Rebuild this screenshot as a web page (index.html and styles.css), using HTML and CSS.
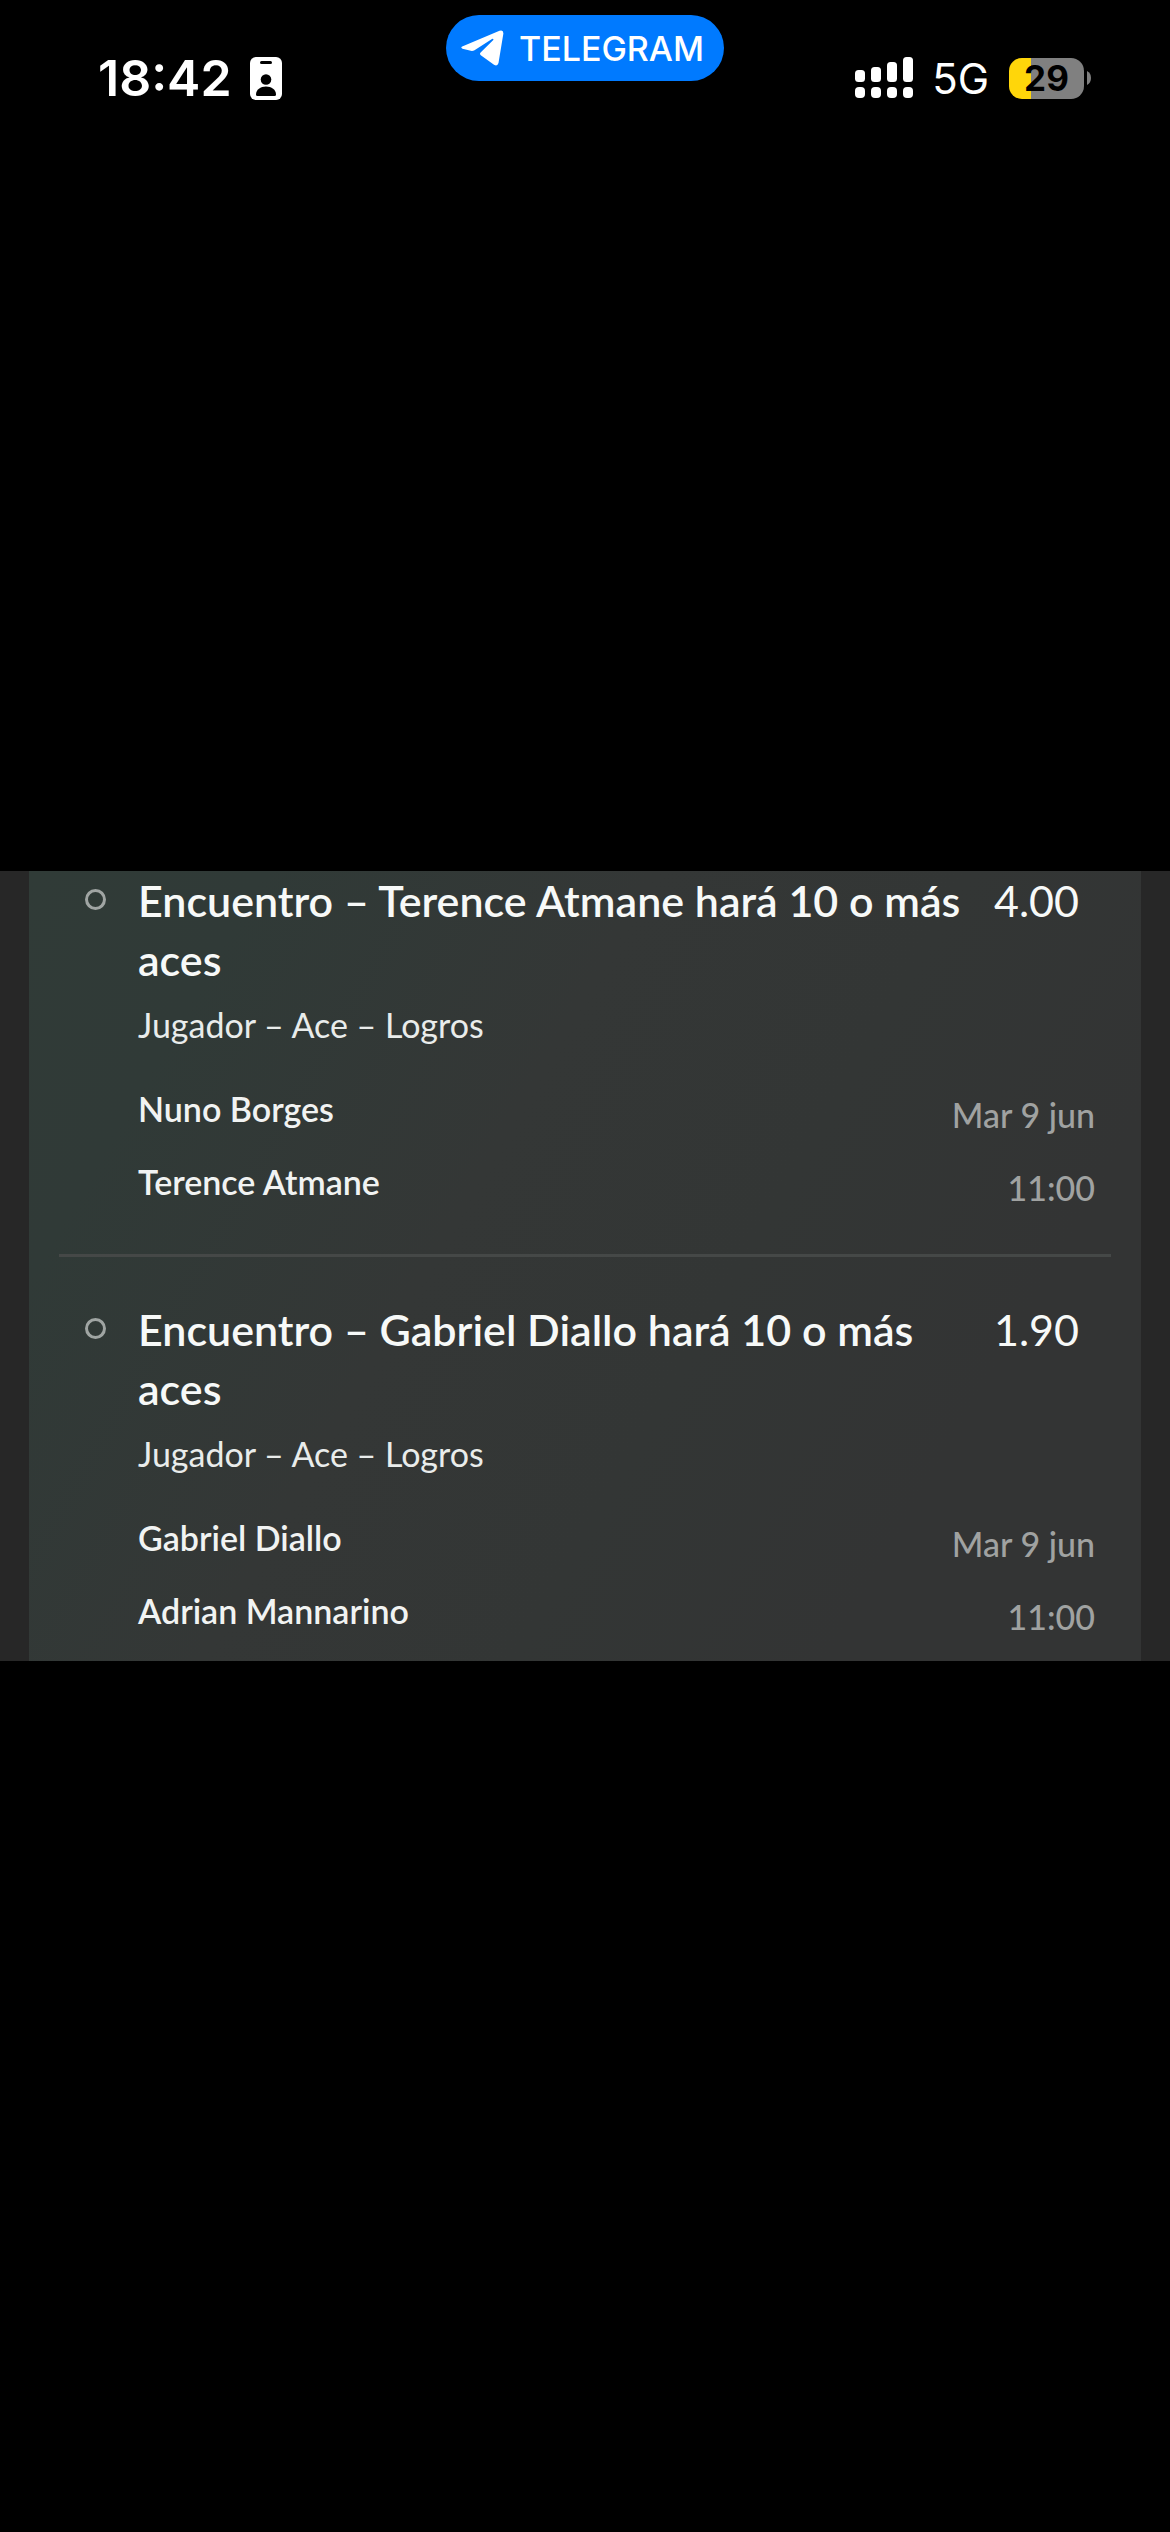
FILE: index.html
```html
<!DOCTYPE html>
<html lang="es">
<head>
    <meta charset="UTF-8">
    <meta name="viewport" content="width=device-width, initial-scale=1.0">
    <title>Encuentros</title>
    <link rel="stylesheet" href="styles.css">
</head>
<body>
    <header class="status-bar">
        <div class="status-left">
            <time class="clock">18:42</time>
            <svg class="badge-icon" viewBox="0 0 32 43" aria-hidden="true">
                <rect width="32" height="43" rx="6" fill="#fff"/>
                <rect x="10" y="4" width="12" height="3" rx="1.5"/>
                <circle cx="16" cy="22.5" r="5.3"/>
                <path d="M6 37.5C6 32.5 10.5 29.5 16 29.5S26 32.5 26 37.5Q26 39 24.5 39H7.5Q6 39 6 37.5Z"/>
            </svg>
        </div>
        <button class="app-pill" type="button">
            <svg class="plane-icon" viewBox="0 0 43 36" aria-hidden="true">
                <path fill="#fff" d="M1.2 16.5L38.5 .8Q42.8 -.5 42.3 4L37.5 33Q36.5 36.8 33 34.8L19.8 25.2Q18.3 24 19.6 22.5L32.3 9.9Q32.8 8.3 31 9L13.5 20.2Q11.8 21.2 9.8 20.8L1.5 18.7Q-.8 17.6 1.2 16.5Z"/>
            </svg>
            <span>TELEGRAM</span>
        </button>
        <div class="status-right">
            <svg class="signal-icon" viewBox="0 0 58 42" fill="#fff" aria-hidden="true">
                <rect x="0" y="13" width="10" height="12" rx="3.5"/>
                <rect x="16" y="10" width="10" height="15" rx="3.5"/>
                <rect x="32" y="5" width="10" height="20" rx="3.5"/>
                <rect x="48" y="0" width="10" height="25" rx="3.5"/>
                <rect x="0" y="30" width="10" height="11" rx="4"/>
                <rect x="16" y="30" width="10" height="11" rx="4"/>
                <rect x="32" y="30" width="10" height="11" rx="4"/>
                <rect x="48" y="30" width="10" height="11" rx="4"/>
            </svg>
            <span class="network">5G</span>
            <div class="battery">
                <span class="battery-level">29</span>
                <svg class="battery-tip" viewBox="0 0 4 14" aria-hidden="true">
                    <path fill="#808080" d="M0 0Q4 2 4 7T0 14Z"/>
                </svg>
            </div>
        </div>
    </header>

    <main class="viewer">
        <div class="slip">
            <article class="bet">
                <span class="bullet"></span>
                <div class="details">
                    <div class="selection">
                        <h2>Encuentro – Terence Atmane hará 10 o más aces</h2>
                        <span class="odds">4.00</span>
                    </div>
                    <p class="market">Jugador – Ace – Logros</p>
                    <div class="event">
                        <div class="players">
                            <p>Nuno Borges</p>
                            <p>Terence Atmane</p>
                        </div>
                        <div class="date">
                            <p>Mar 9 jun</p>
                            <p>11:00</p>
                        </div>
                    </div>
                </div>
            </article>
            <article class="bet">
                <span class="bullet"></span>
                <div class="details">
                    <div class="selection">
                        <h2>Encuentro – Gabriel Diallo hará 10 o más aces</h2>
                        <span class="odds">1.90</span>
                    </div>
                    <p class="market">Jugador – Ace – Logros</p>
                    <div class="event">
                        <div class="players">
                            <p>Gabriel Diallo</p>
                            <p>Adrian Mannarino</p>
                        </div>
                        <div class="date">
                            <p>Mar 9 jun</p>
                            <p>11:00</p>
                        </div>
                    </div>
                </div>
            </article>
        </div>
    </main>
</body>
</html>
```
FILE: styles.css
```css
* {
    margin: 0;
    padding: 0;
    box-sizing: border-box;
}

body {
    display: grid;
    grid-template-rows: 1fr auto 1fr;
    min-height: 100vh;
    background: black;
    color: white;
    font-family: Lato, sans-serif;
}

/* status bar */

.status-bar {
    display: grid;
    grid-template-columns: 1fr auto 1fr;
    align-items: start;
    padding: 15px 79px 0;
    font-family: Inter, sans-serif;
}

.status-left,
.status-right {
    display: flex;
    align-items: center;
    height: 60px;
    margin-top: 33px;
}

.status-left {
    gap: 18px;
    padding-left: 19px;
}

.status-right {
    justify-content: flex-end;
}

.clock {
    font-size: 50px;
    font-weight: 600;
}

.badge-icon {
    width: 32px;
    height: 43px;
}

.app-pill {
    display: flex;
    align-items: center;
    gap: 15px;
    height: 66px;
    padding: 0 20px 0 15px;
    border: 0;
    border-radius: 33px;
    background: #007aff;
    color: white;
    font-family: inherit;
    font-size: 34px;
    font-weight: 500;
}

.plane-icon {
    width: 43px;
    height: 36px;
}

.signal-icon {
    width: 58px;
    height: 42px;
}

.network {
    margin: 0 20px 0 19px;
    font-size: 42px;
}

.battery {
    display: flex;
    align-items: center;
    gap: 3px;
}

.battery-level {
    width: 75px;
    height: 41px;
    border-radius: 13px;
    background: linear-gradient(to right, #ffd60a 22px, #808080 22px);
    color: black;
    font-size: 35px;
    font-weight: 700;
    line-height: 41px;
    text-align: center;
}

.battery-tip {
    width: 4px;
    height: 14px;
}

/* bet slip */

.viewer {
    grid-row: 2;
    padding: 0 29px;
    background: #272727;
}

.slip {
    padding: 0 30px 14px;
    background: linear-gradient(120deg, #303b37 0%, #303a37 15%, #343736 40%, #333635 60%, #333434 80%);
}

.bet {
    display: flex;
    gap: 32px;
    padding-left: 26px;
}

.bet + .bet {
    margin-top: 36px;
    padding-top: 43px;
    border-top: 3px solid #454847;
}

.bullet {
    flex: none;
    width: 21px;
    height: 21px;
    margin-top: 18px;
    border: 3px solid #a0a5a3;
    border-radius: 50%;
}

.details {
    flex: 1;
    padding-right: 16px;
}

.selection {
    display: flex;
    justify-content: space-between;
    gap: 14px;
    padding-right: 16px;
    font-size: 43px;
    line-height: 59px;
}

h2 {
    font-size: 43px;
    font-weight: 600;
    color: #f7f9f8;
}

.odds {
    flex: none;
    text-align: right;
    color: #f7f9f8;
}

.market {
    margin-top: 14px;
    font-size: 34px;
    line-height: 44px;
    color: #e9eceb;
}

.event {
    display: flex;
    justify-content: space-between;
    margin-top: 25px;
    font-size: 34px;
    font-weight: 600;
    line-height: 73px;
    color: #f1f3f2;
}

.date {
    margin-top: 6px;
    margin-bottom: -6px;
    font-weight: 500;
    text-align: right;
    color: #a0a2a1;
}
```
